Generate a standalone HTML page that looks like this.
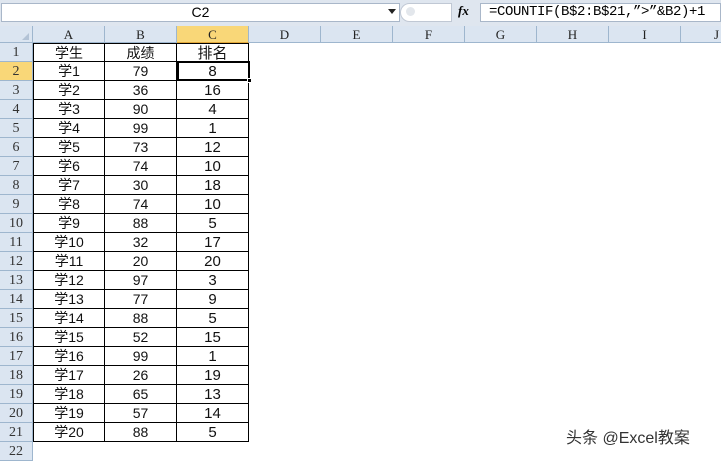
<!DOCTYPE html><html><head><meta charset="utf-8"><style>
body{margin:0;width:721px;height:456px;overflow:hidden;background:#fff;font-family:"Liberation Sans","Noto Sans CJK SC",sans-serif;position:relative}
.a{position:absolute;box-sizing:border-box}
.ch{position:absolute;top:26px;height:17px;background:#dbe5f1;border-right:1px solid #9eb6ce;border-bottom:1px solid #9eb6ce;font:13px "Liberation Serif",serif;color:#222;text-align:center;line-height:17px;box-sizing:border-box}
.rh{position:absolute;left:0;width:33px;height:19px;background:#dbe5f1;border-right:1px solid #9eb6ce;border-bottom:1px solid #9eb6ce;font:14px "Liberation Serif",serif;color:#333;text-align:center;line-height:19px;box-sizing:border-box}
.c{position:absolute;height:19px;text-align:center;line-height:19px;font-size:14px;color:#111;border-right:1px solid #000;border-bottom:1px solid #000;box-sizing:border-box}
</style></head><body>
<div class="a" style="left:0;top:0;width:721px;height:26px;background:#dfe6ef"></div>
<div class="a" style="left:1px;top:3px;width:399px;height:19px;background:#fff;border:1px solid #a9b7c9;font-size:14px;text-align:center;line-height:17px">C2</div>
<div class="a" style="left:388px;top:9px;width:0;height:0;border-left:4px solid transparent;border-right:4px solid transparent;border-top:5px solid #222"></div>
<div class="a" style="left:400px;top:3px;width:52px;height:19px;background:#fff;border:1px solid #c0c8d4;border-radius:10px 0 0 10px"></div>
<div class="a" style="left:406px;top:7px;width:9px;height:9px;border-radius:50%;background:#e3e7ec"></div>
<div class="a" style="left:458px;top:3px;font:italic bold 13px 'Liberation Serif',serif">fx</div>
<div class="a" style="left:480px;top:3px;width:241px;height:19px;background:#fff;border:1px solid #a9b7c9;font:14px 'Liberation Mono','Noto Sans CJK SC',monospace;line-height:17px;padding-left:8px;letter-spacing:-0.4px">=COUNTIF(B$2:B$21,”&gt;”&amp;B2)+1</div>
<div class="ch" style="left:0;width:33px"></div>
<div class="a" style="left:22px;top:33px;width:0;height:0;border-left:7px solid transparent;border-bottom:7px solid #b3c3d6"></div>
<div class="ch" style="left:33px;width:72px">A</div>
<div class="ch" style="left:105px;width:72px">B</div>
<div class="ch" style="left:177px;width:72px;background:#f9d778;border-bottom:1px solid #e2a83a">C</div>
<div class="ch" style="left:249px;width:72px">D</div>
<div class="ch" style="left:321px;width:72px">E</div>
<div class="ch" style="left:393px;width:72px">F</div>
<div class="ch" style="left:465px;width:72px">G</div>
<div class="ch" style="left:537px;width:72px">H</div>
<div class="ch" style="left:609px;width:72px">I</div>
<div class="ch" style="left:681px;width:72px">J</div>
<div id="g"></div>
<div class="a" style="left:177px;top:61px;width:73px;height:20px;border:2px solid #000"></div>
<div class="a" style="left:247px;top:78px;width:5px;height:5px;background:#000;border:1px solid #fff"></div>
<div class="a" style="left:566px;top:424px;font-size:16px;color:#333">头条 @Excel教案</div>
<script>
var d=[["学生","成绩","排名"],["学1",79,8],["学2",36,16],["学3",90,4],["学4",99,1],["学5",73,12],["学6",74,10],["学7",30,18],["学8",74,10],["学9",88,5],["学10",32,17],["学11",20,20],["学12",97,3],["学13",77,9],["学14",88,5],["学15",52,15],["学16",99,1],["学17",26,19],["学18",65,13],["学19",57,14],["学20",88,5]];
var h="";
for(var i=0;i<22;i++){var t=43+i*19;h+='<div class="rh" style="top:'+t+'px;'+(i==1?'background:#f9d778;':'')+'">'+(i+1)+'</div>';
if(i<21){for(var j=0;j<3;j++){h+='<div class="c" style="left:'+(33+j*72)+'px;width:72px;top:'+t+'px;'+(j==0?'border-left:1px solid #000;':'')+(i==0?'border-top:1px solid #000;':'')+(j==2?'font-size:15px;':'')+'">'+d[i][j]+'</div>';}}}
document.getElementById("g").innerHTML=h;
</script>
</body></html>
